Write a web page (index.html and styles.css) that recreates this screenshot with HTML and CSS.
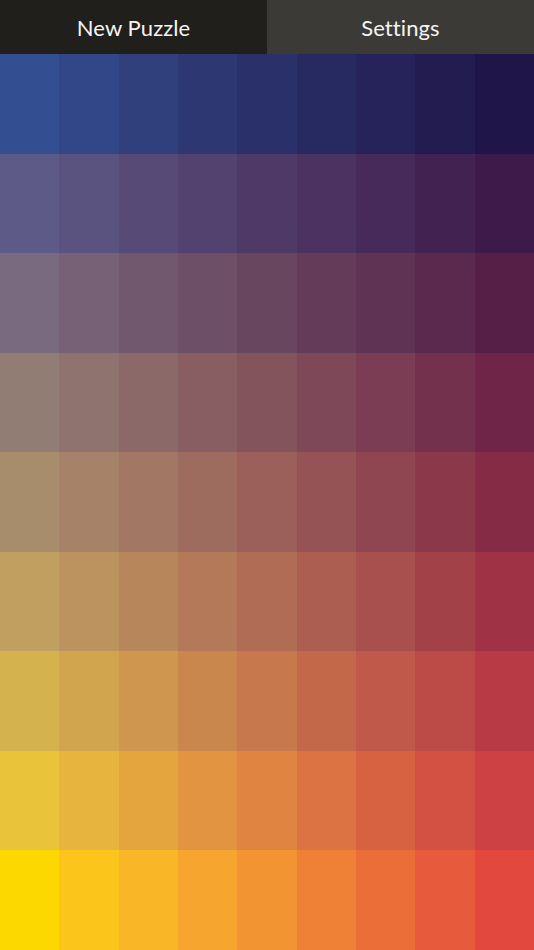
FILE: index.html
```html
<!DOCTYPE html>
<html>
<head>
<meta charset="utf-8">
<link rel="stylesheet" href="styles.css">
</head>
<body>
<div class="app">
  <div class="topbar">
    <div class="btn btn-new">New Puzzle</div>
    <div class="btn btn-settings">Settings</div>
  </div>
  <div class="board">
    <div class="cell" style="background:#344f91"></div><div class="cell" style="background:#324787"></div><div class="cell" style="background:#2f407d"></div><div class="cell" style="background:#2d3873"></div><div class="cell" style="background:#2a3069"></div><div class="cell" style="background:#272961"></div><div class="cell" style="background:#252359"></div><div class="cell" style="background:#221c51"></div><div class="cell" style="background:#1f1549"></div>
    <div class="cell" style="background:#5e5a87"></div><div class="cell" style="background:#5a527f"></div><div class="cell" style="background:#574a77"></div><div class="cell" style="background:#53426f"></div><div class="cell" style="background:#4f3a67"></div><div class="cell" style="background:#4b3260"></div><div class="cell" style="background:#472a59"></div><div class="cell" style="background:#422251"></div><div class="cell" style="background:#3e1a4a"></div>
    <div class="cell" style="background:#7a6a7f"></div><div class="cell" style="background:#766177"></div><div class="cell" style="background:#71586f"></div><div class="cell" style="background:#6d4f67"></div><div class="cell" style="background:#68465f"></div><div class="cell" style="background:#643c59"></div><div class="cell" style="background:#5f3354"></div><div class="cell" style="background:#5b294e"></div><div class="cell" style="background:#561f48"></div>
    <div class="cell" style="background:#927d75"></div><div class="cell" style="background:#8f736f"></div><div class="cell" style="background:#8b6969"></div><div class="cell" style="background:#885e63"></div><div class="cell" style="background:#84545d"></div><div class="cell" style="background:#7f4858"></div><div class="cell" style="background:#7a3d53"></div><div class="cell" style="background:#74314d"></div><div class="cell" style="background:#6f2548"></div>
    <div class="cell" style="background:#a88d6c"></div><div class="cell" style="background:#a58268"></div><div class="cell" style="background:#a27763"></div><div class="cell" style="background:#9e6b5f"></div><div class="cell" style="background:#9b605a"></div><div class="cell" style="background:#965355"></div><div class="cell" style="background:#904650"></div><div class="cell" style="background:#8b384a"></div><div class="cell" style="background:#852b45"></div>
    <div class="cell" style="background:#c09f61"></div><div class="cell" style="background:#bc925e"></div><div class="cell" style="background:#b8865b"></div><div class="cell" style="background:#b47958"></div><div class="cell" style="background:#b06c55"></div><div class="cell" style="background:#ac5e51"></div><div class="cell" style="background:#a8504d"></div><div class="cell" style="background:#a34149"></div><div class="cell" style="background:#9f3345"></div>
    <div class="cell" style="background:#d4b34f"></div><div class="cell" style="background:#d1a44e"></div><div class="cell" style="background:#ce964e"></div><div class="cell" style="background:#ca874d"></div><div class="cell" style="background:#c7784c"></div><div class="cell" style="background:#c3694a"></div><div class="cell" style="background:#c05949"></div><div class="cell" style="background:#bc4a47"></div><div class="cell" style="background:#b83a45"></div>
    <div class="cell" style="background:#e9c43b"></div><div class="cell" style="background:#e7b43d"></div><div class="cell" style="background:#e4a43e"></div><div class="cell" style="background:#e29440"></div><div class="cell" style="background:#df8441"></div><div class="cell" style="background:#db7342"></div><div class="cell" style="background:#d66242"></div><div class="cell" style="background:#d25143"></div><div class="cell" style="background:#cd4043"></div>
    <div class="cell" style="background:#fdd800"></div><div class="cell" style="background:#fcc51c"></div><div class="cell" style="background:#f9b627"></div><div class="cell" style="background:#f6a62e"></div><div class="cell" style="background:#f39433"></div><div class="cell" style="background:#ef8136"></div><div class="cell" style="background:#eb6e39"></div><div class="cell" style="background:#e75b3c"></div><div class="cell" style="background:#e3483f"></div>
  </div>
</div>
</body>
</html>
```
FILE: styles.css
```css
html, body {
  margin: 0;
  padding: 0;
  width: 534px;
  height: 950px;
  overflow: hidden;
}
.app {
  display: flex;
  flex-direction: column;
  width: 534px;
  height: 950px;
}
.topbar {
  display: flex;
  height: 54px;
  flex: 0 0 54px;
}
.btn {
  flex: 1 1 0;
  display: flex;
  align-items: center;
  justify-content: center;
  color: #f4f4f2;
  font-family: Lato, "Open Sans", sans-serif;
  font-size: 22px;
  letter-spacing: 0.1px;
}
.btn-new {
  background: #201f1c;
}
.btn-settings {
  background: #3b3a36;
}
.board {
  flex: 1 1 auto;
  display: grid;
  grid-template-columns: repeat(9, 1fr);
  grid-template-rows: repeat(9, 1fr);
}
.cell {
  min-width: 0;
  min-height: 0;
}
```
